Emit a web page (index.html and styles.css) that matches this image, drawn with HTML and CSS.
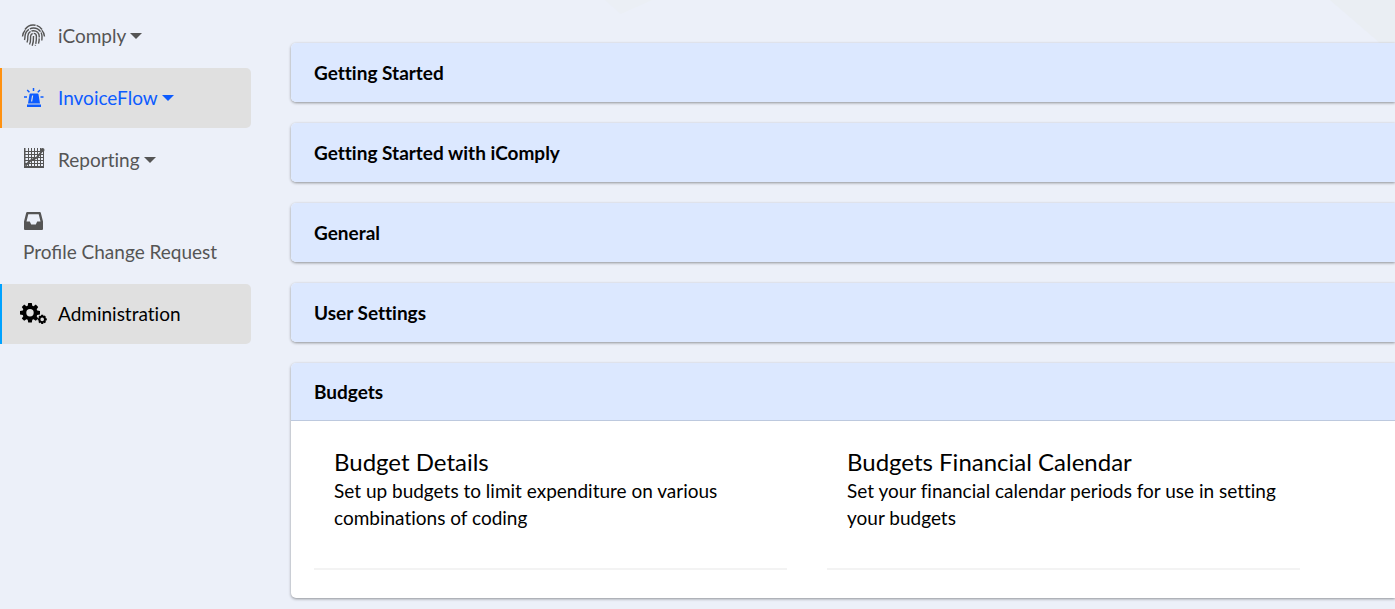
FILE: index.html
```html
<!DOCTYPE html>
<html lang="en">
    <head>
        <meta charset="utf-8">
        <title>Administration</title>
        <link rel="stylesheet" href="styles.css">
    </head>
    <body>
        <svg class="backdrop" viewBox="0 0 1395 609" preserveAspectRatio="none" aria-hidden="true">
            <path class="backdrop-light" d="M605 0L621 14L652 0Z"/>
            <path class="backdrop-dark" d="M1330 0L1395 56V0Z"/>
        </svg>
        <nav class="sidebar">
            <button type="button" class="nav-item">
                <svg class="icon icon-print" viewBox="0 0 21 21" aria-hidden="true">
                    <path d="M2 4.5C6-1.5 15-1.5 19 4.5M-.5 11.5C-.3 8.8.6 6.8 2.2 5.2M21.5 11.5C21.3 8.8 20.4 6.8 18.8 5.2"/>
                    <path d="M1.5 15C2 13.6 2 12.6 2 11.3C2.2 7 5.5 3 10.5 3S19 7 19 11.3C19 12.7 19 14 18.8 15.5"/>
                    <path d="M4 17.5C5 15.3 4.8 13.2 4.8 11.3C5 8 7.2 5.7 10.5 5.7S16.2 8.2 16.2 11.3C16.3 13.8 16.2 16 15.5 18.6"/>
                    <path d="M6.5 19.5C8 16.8 7.5 13.8 7.6 11.3C7.8 9.4 8.9 8.4 10.5 8.4S13.4 9.5 13.4 11.3C13.5 14.6 13.3 17.4 12.3 20.6"/>
                    <path d="M10.5 11C10.6 14.5 10.5 17.5 9.2 20.8"/>
                </svg><span class="nav-label">iComply</span><span class="caret"></span>
            </button>
            <button type="button" class="nav-item nav-item-open">
                <svg class="icon" viewBox="0 0 21 21" aria-hidden="true">
                    <path fill-rule="evenodd" d="M4 17.5H18V20H4ZM5 16.5L6.5 7.3Q6.7 6.5 7.5 6.5H14.5Q15.3 6.5 15.5 7.3L17 16.5ZM9 8.5L8 14.5H9.2L10.2 8.5Z"/>
                    <path class="icon-line" d="M10.5 1V4M4.2 3L6.4 5.2M17 3L14.8 5.2M1 10H4M17.5 10H20.5"/>
                </svg><span class="nav-label">InvoiceFlow</span><span class="caret"></span>
            </button>
            <button type="button" class="nav-item">
                <svg class="icon" viewBox="0 0 21 21" aria-hidden="true">
                    <path d="M1 -1H2.5V17H21V19H1Z"/>
                    <path class="icon-grid" d="M5.5 -1V17M8.5 -1V17M11.5 -1V17M14.5 -1V17M17.5 -1V17M20.5 2V17M2 2.5H19M2 5.5H21M2 8.5H21M2 11.5H21M2 14.5H21"/>
                    <path class="icon-trend" d="M2.5 16.5L7.5 11.5L14 8.5L19.5 1.5"/>
                    <circle cx="19.5" cy="1" r="2"/>
                </svg><span class="nav-label">Reporting</span><span class="caret"></span>
            </button>
            <a href="#profile" class="nav-item">
                <svg class="icon" viewBox="0 0 21 21" aria-hidden="true">
                    <path fill-rule="evenodd" d="M4.2 1H16.8Q17.6 1 17.8 1.7L20 10.5V18Q20 19 19 19H2Q1 19 1 18V10.5L3.2 1.7Q3.4 1 4.2 1ZM5.3 3.3L3.5 10.6H6.8L8.2 13.5H12.8L14.2 10.6H17.5L15.7 3.3Z"/>
                </svg><span class="nav-label ligatures">Profile Change Request</span>
            </a>
            <a href="#administration" class="nav-item nav-item-current">
                <svg class="icon" viewBox="0 0 21 21" aria-hidden="true">
                    <path fill-rule="evenodd" d="M5.2 0H8.8L9.3 2.7L10.6 3.2L12.8 1.6L15.2 4L13.7 6.2L14.2 7.6L17 8V11.4L14.2 11.9L13.7 13.2L15.2 15.4L12.8 17.8L10.6 16.3L9.3 16.8L8.8 19.4H5.2L4.7 16.8L3.4 16.3L1.2 17.8L-1.2 15.4L.3 13.2L-.2 11.9L-3 11.4V8L-.2 7.6L.3 6.2L-1.2 4L1.2 1.6L3.4 3.2L4.7 2.7ZM7 6A3.7 3.7 0 1 0 7 13.4A3.7 3.7 0 1 0 7 6Z"/>
                    <path fill-rule="evenodd" d="M18.3 11.8H20.2L20.5 13.1L21.7 12.6L23 13.9L22.4 15.1L23.8 15.5V17.3L22.4 17.7L23 18.9L21.7 20.2L20.5 19.6L20.2 21H18.3L17.9 19.6L16.7 20.2L15.4 18.9L16 17.7L14.7 17.3V15.5L16 15.1L15.4 13.9L16.7 12.6L17.9 13.1ZM19.2 14.6A1.8 1.8 0 1 0 19.2 18.2A1.8 1.8 0 1 0 19.2 14.6Z"/>
                </svg><span class="nav-label">Administration</span>
            </a>
        </nav>
        <main class="content">
            <section class="card">
                <h2><button type="button" class="card-header">Getting Started</button></h2>
            </section>
            <section class="card">
                <h2><button type="button" class="card-header">Getting Started with iComply</button></h2>
            </section>
            <section class="card">
                <h2><button type="button" class="card-header">General</button></h2>
            </section>
            <section class="card">
                <h2><button type="button" class="card-header">User Settings</button></h2>
            </section>
            <section class="card">
                <h2><button type="button" class="card-header card-header-open">Budgets</button></h2>
                <div class="card-body">
                    <a href="#budget-details" class="option">
                        <h3>Budget Details</h3>
                        <p>Set up budgets to limit expenditure on various combinations of coding</p>
                    </a>
                    <a href="#budgets-calendar" class="option">
                        <h3>Budgets Financial Calendar</h3>
                        <p>Set your financial calendar periods for use in setting your budgets</p>
                    </a>
                </div>
            </section>
        </main>
    </body>
</html>
```

FILE: styles.css
```css
* {
    box-sizing: border-box;
}

body {
    margin: 0;
    display: flex;
    align-items: flex-start;
    background-color: #ecf0f9;
    color: #000;
    font-family: Lato, sans-serif;
    font-size: 19px;
    font-variant-ligatures: none;
}

h2, h3, p {
    margin: 0;
}

button {
    border: 0;
    font: inherit;
    font-variant-ligatures: none;
    cursor: pointer;
}

a {
    color: inherit;
    text-decoration: none;
}

.ligatures {
    font-variant-ligatures: normal;
}

.backdrop {
    position: absolute;
    top: 0;
    left: 0;
    width: 100%;
    height: 100%;
    z-index: -1;
}

.backdrop-light {
    fill: #ebeff5;
}

.backdrop-dark {
    fill: #eaeef3;
}

.sidebar {
    flex: 0 0 251px;
    display: flex;
    flex-direction: column;
    gap: 2px;
    padding-top: 6px;
}

.nav-item {
    display: block;
    padding: 15px 20px 15px 21px;
    border-left: 2px solid transparent;
    border-radius: 0 5px 5px 0;
    background-color: transparent;
    color: #555;
    line-height: 30px;
    text-align: left;
}

.nav-item-open {
    border-left-color: #ff9110;
    background-color: #e0e0e0;
    color: #0d5cff;
}

.nav-item-current {
    border-left-color: #00a2ff;
    background-color: #e0e0e0;
    color: #000;
}

.nav-label {
    display: inline-block;
}

.icon {
    width: 21px;
    height: 21px;
    margin-right: 14px;
    overflow: visible;
    vertical-align: -3px;
    fill: currentColor;
}

.icon-line {
    fill: none;
    stroke: currentColor;
    stroke-width: 1.5;
}

.icon-print {
    fill: none;
    stroke: currentColor;
    stroke-width: 1.4;
    stroke-dasharray: 12 1;
}

.icon-grid {
    fill: none;
    stroke: currentColor;
    stroke-width: 1;
}

.icon-trend {
    fill: none;
    stroke: currentColor;
    stroke-width: 2;
}

.caret {
    display: inline-block;
    margin-left: 4px;
    border: 6px solid transparent;
    border-top-color: currentColor;
    border-bottom: 0;
    vertical-align: 4px;
}

.content {
    flex: 1;
    min-width: 0;
    display: flex;
    flex-direction: column;
    gap: 21px;
    padding: 43px 0 11px 40px;
}

.card {
    border-radius: 5px 0 0 5px;
    background-color: #fff;
    box-shadow: 0 1px 3px rgba(0, 0, 0, 0.4);
}

.card h2 {
    font-size: 19px;
}

.card-header {
    display: block;
    width: 100%;
    padding: 16px 23px;
    border-radius: 5px 0 0 5px;
    background-color: #dce8ff;
    color: #000;
    line-height: 27px;
    text-align: left;
}

/* the divider takes its pixel from the padding */
.card-header-open {
    padding: 15px 23px;
    border-bottom: 1px solid #bdc9de;
    border-radius: 5px 0 0 0;
}

.card-body {
    display: grid;
    grid-template-columns: 1fr 1fr;
    column-gap: 40px;
    padding: 26px 95px 28px 23px;
}

.option {
    padding: 0 20px 37px;
    border-bottom: 2px solid #f3f3f3;
    line-height: 27px;
}

.option h3 {
    font-size: 24px;
    font-weight: normal;
    line-height: 30px;
}
```
